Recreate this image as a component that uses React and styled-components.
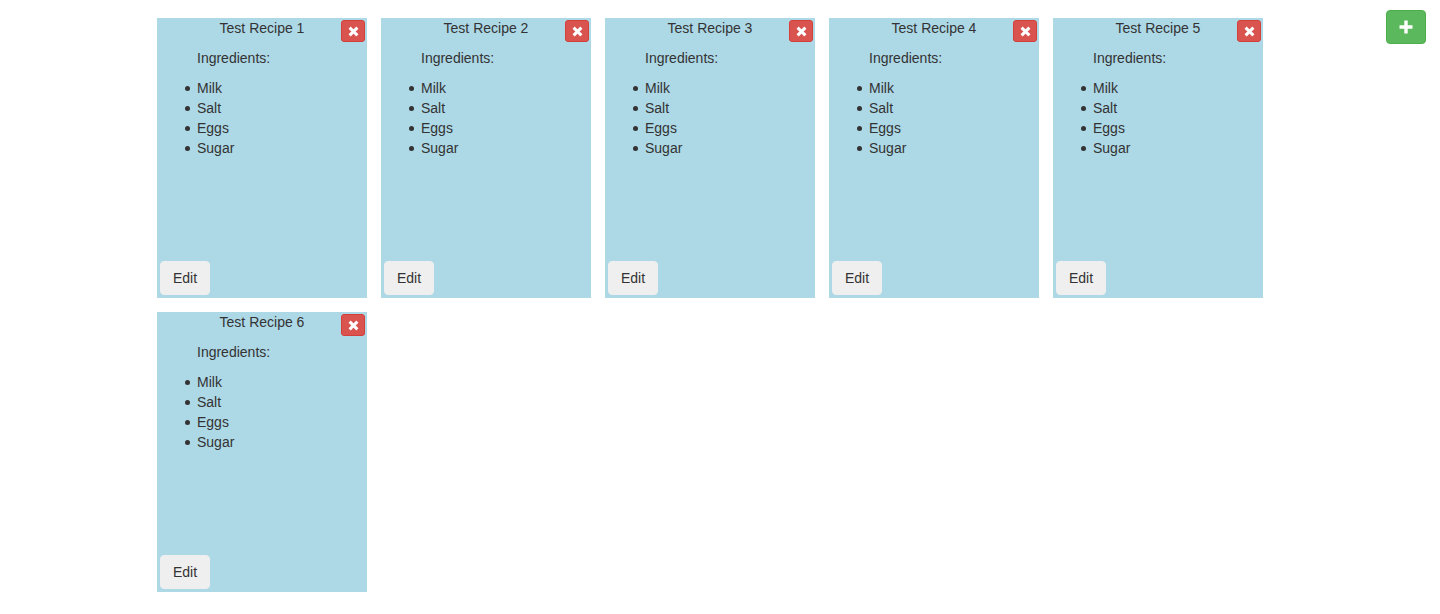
import React from "react";
import styled, { createGlobalStyle } from "styled-components";

const Global = createGlobalStyle`
  html, body { margin: 0; padding: 0; background: #fff; }
  body {
    font-family: "Liberation Sans", Arial, Helvetica, sans-serif;
    font-size: 14px;
    line-height: 20px;
    color: #333;
  }
`;

const Page = styled.div`
  position: relative;
  width: 1440px;
  min-height: 614px;
`;

const Container = styled.div`
  width: 1140px;
  margin: 0 auto;
  padding: 11px 0 0 0;
  display: flex;
  flex-wrap: wrap;
  box-sizing: border-box;
`;

const Card = styled.div`
  position: relative;
  width: 210px;
  height: 280px;
  margin: 7px;
  background: #add8e6;
  display: flex;
  flex-direction: column;
  box-sizing: border-box;
`;

const Title = styled.div`
  text-align: center;
  height: 20px;
  line-height: 20px;
`;

const Label = styled.div`
  margin-top: 10px;
  padding-left: 40px;
`;

const List = styled.ul`
  margin: 10px 0 0 0;
  padding-left: 40px;
  list-style: none;
`;

const Item = styled.li`
  position: relative;
  line-height: 20px;
  &::before {
    content: "";
    position: absolute;
    left: -12.5px;
    top: 8px;
    width: 5px;
    height: 5px;
    border-radius: 50%;
    background: #333;
  }
`;

const IconButton = styled.button`
  border: 1px solid ${(p) => p.$border};
  background: ${(p) => p.$bg};
  border-radius: ${(p) => p.$radius}px;
  width: ${(p) => p.$w}px;
  height: ${(p) => p.$h}px;
  padding: 0;
  display: flex;
  align-items: center;
  justify-content: center;
  cursor: pointer;
  box-sizing: border-box;
`;

const DeleteWrap = styled.div`
  position: absolute;
  top: 2px;
  right: 2px;
`;

const AddWrap = styled.div`
  position: absolute;
  top: 10px;
  right: 14px;
`;

const EditButton = styled.button`
  margin-top: auto;
  margin-left: 3px;
  margin-bottom: 3px;
  align-self: flex-start;
  width: 50px;
  height: 34px;
  padding: 0;
  border: 1px solid #efefef;
  border-radius: 4px;
  background: #efefef;
  color: #333;
  font-family: "Liberation Sans", Arial, sans-serif;
  font-size: 14px;
  line-height: 20px;
  cursor: pointer;
`;

const XIcon = () => (
  <svg width="11" height="11" viewBox="0 0 11 11">
    <path d="M1.6 1.6 L9.4 9.4 M9.4 1.6 L1.6 9.4" stroke="#fff" strokeWidth="3" strokeLinecap="butt" />
  </svg>
);

const PlusIcon = () => (
  <svg width="14" height="14" viewBox="0 0 14 14">
    <path d="M7 0.5 V13.5 M0.5 7 H13.5" stroke="#fff" strokeWidth="3.4" />
  </svg>
);

const recipes = [1, 2, 3, 4, 5, 6].map((n) => ({
  name: `Test Recipe ${n}`,
  ingredients: ["Milk", "Salt", "Eggs", "Sugar"],
}));

export default function App() {
  return (
    <Page>
      <Global />
      <Container>
        {recipes.map((r) => (
          <Card key={r.name}>
            <Title>{r.name}</Title>
            <DeleteWrap>
              <IconButton $bg="#d9534f" $border="#d43f3a" $radius={3} $w={24} $h={22}>
                <XIcon />
              </IconButton>
            </DeleteWrap>
            <Label>Ingredients:</Label>
            <List>
              {r.ingredients.map((i) => (
                <Item key={i}>{i}</Item>
              ))}
            </List>
            <EditButton>Edit</EditButton>
          </Card>
        ))}
      </Container>
      <AddWrap>
        <IconButton $bg="#5cb85c" $border="#4cae4c" $radius={4} $w={40} $h={34}>
          <PlusIcon />
        </IconButton>
      </AddWrap>
    </Page>
  );
}
